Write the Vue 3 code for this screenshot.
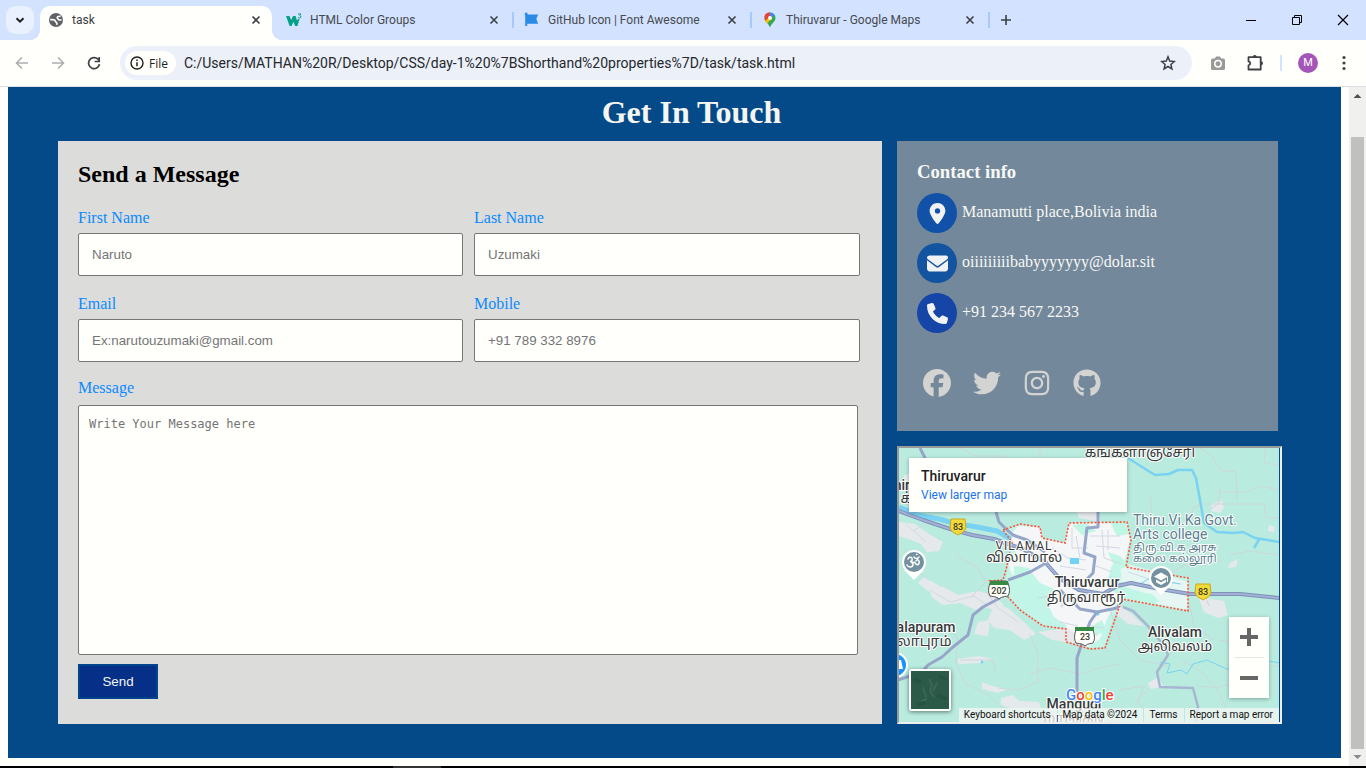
<script setup>
const tabs = [
  { title: 'task', icon: 'globe', active: true },
  { title: 'HTML Color Groups', icon: 'w3' },
  { title: 'GitHub Icon | Font Awesome', icon: 'flag' },
  { title: 'Thiruvarur - Google Maps', icon: 'pin' }
]

const fields = [
  { id: 'first', label: 'First Name', hint: 'Naruto', type: 'text' },
  { id: 'last', label: 'Last Name', hint: 'Uzumaki', type: 'text' },
  { id: 'email', label: 'Email', hint: 'Ex:narutouzumaki@gmail.com', type: 'email' },
  { id: 'mobile', label: 'Mobile', hint: '+91 789 332 8976', type: 'tel' }
]

const contacts = [
  {
    tone: 'place', text: 'Manamutti place,Bolivia india', box: '0 0 384 512',
    path: 'M215.7 499.2C267 435 384 279.4 384 192C384 86 298 0 192 0S0 86 0 192c0 87.4 117 243 168.3 307.2c12.3 15.3 35.1 15.3 47.4 0zM192 128a64 64 0 1 1 0 128 64 64 0 1 1 0-128z'
  },
  {
    tone: 'mail', text: 'oiiiiiiiiibabyyyyyyy@dolar.sit', box: '0 0 512 512',
    path: 'M48 64C21.5 64 0 85.5 0 112c0 15.1 7.1 29.3 19.2 38.4L236.8 313.6c11.4 8.5 27 8.5 38.4 0L492.8 150.4c12.1-9.1 19.2-23.3 19.2-38.4c0-26.5-21.5-48-48-48H48zM0 176V384c0 35.3 28.7 64 64 64H448c35.3 0 64-28.7 64-64V176L294.4 339.2c-22.8 17.1-54 17.1-76.8 0L0 176z'
  },
  {
    tone: 'phone', text: '+91 234 567 2233', box: '0 0 512 512',
    path: 'M164.9 24.6c-7.7-18.6-28-28.5-47.4-23.2l-88 24C12.1 30.2 0 46 0 64C0 311.4 200.6 512 448 512c18 0 33.8-12.1 38.6-29.5l24-88c5.3-19.4-4.6-39.7-23.2-47.4l-96-40c-16.3-6.8-35.2-2.1-46.3 11.6L304.7 368C234.3 334.7 177.3 277.7 144 207.3L193.3 167c13.7-11.2 18.4-30 11.6-46.3l-40-96z'
  }
]

const socials = [
  {
    name: 'Facebook', box: '0 0 512 512',
    path: 'M512 256C512 114.6 397.4 0 256 0S0 114.6 0 256C0 376 82.7 476.8 194.2 504.5V334.2H141.4V256h52.8V222.3c0-87.1 39.4-127.5 125-127.5c16.2 0 44.2 3.2 55.7 6.4V172c-6-.6-16.5-1-29.6-1c-42 0-58.2 15.9-58.2 57.2V256h83.6l-14.4 78.2H287V510.1C413.8 494.8 512 386.9 512 256z'
  },
  {
    name: 'Twitter', box: '0 0 512 512',
    path: 'M459.37 151.716c.325 4.548.325 9.097.325 13.645 0 138.72-105.583 298.558-298.558 298.558-59.452 0-114.68-17.219-161.137-47.106 8.447.974 16.568 1.299 25.34 1.299 49.055 0 94.213-16.568 130.274-44.832-46.132-.975-84.792-31.188-98.112-72.772 6.498.974 12.995 1.624 19.818 1.624 9.421 0 18.843-1.3 27.614-3.573-48.081-9.747-84.143-51.98-84.143-102.985v-1.299c13.969 7.797 30.214 12.67 47.431 13.319-28.264-18.843-46.781-51.005-46.781-87.391 0-19.492 5.197-37.36 14.294-52.954 51.655 63.675 129.3 105.258 216.365 109.807-1.624-7.797-2.599-15.918-2.599-24.04 0-57.828 46.782-104.934 104.934-104.934 30.213 0 57.502 12.67 76.67 33.137 23.715-4.548 46.456-13.32 66.599-25.34-7.798 24.366-24.366 44.833-46.132 57.827 21.117-2.273 41.584-8.122 60.426-16.243-14.292 20.791-32.161 39.308-52.628 54.253z'
  },
  {
    name: 'Instagram', box: '0 0 448 512',
    path: 'M224.1 141c-63.6 0-114.9 51.3-114.9 114.9s51.3 114.9 114.9 114.9S339 319.5 339 255.9 287.7 141 224.1 141zm0 189.6c-41.1 0-74.7-33.5-74.7-74.7s33.5-74.7 74.7-74.7 74.7 33.5 74.7 74.7-33.6 74.7-74.7 74.7zm146.4-194.3c0 14.9-12 26.8-26.8 26.8-14.9 0-26.8-12-26.8-26.8s12-26.8 26.8-26.8 26.8 12 26.8 26.8zm76.1 27.2c-1.7-35.9-9.9-67.7-36.2-93.9-26.2-26.2-58-34.4-93.9-36.2-37-2.1-147.9-2.1-184.9 0-35.8 1.7-67.6 9.9-93.9 36.1s-34.4 58-36.2 93.9c-2.1 37-2.1 147.9 0 184.9 1.7 35.9 9.9 67.7 36.2 93.9s58 34.4 93.9 36.2c37 2.1 147.9 2.1 184.9 0 35.9-1.7 67.7-9.9 93.9-36.2 26.2-26.2 34.4-58 36.2-93.9 2.1-37 2.1-147.8 0-184.8zM398.8 388c-7.8 19.6-22.9 34.7-42.6 42.6-29.5 11.7-99.5 9-132.1 9s-102.7 2.6-132.1-9c-19.6-7.8-34.7-22.9-42.6-42.6-11.7-29.5-9-99.5-9-132.1s-2.6-102.7 9-132.1c7.8-19.6 22.9-34.7 42.6-42.6 29.5-11.7 99.5-9 132.1-9s102.7-2.6 132.1 9c19.6 7.8 34.7 22.9 42.6 42.6 11.7 29.5 9 99.5 9 132.1s2.7 102.7-9 132.1z'
  },
  {
    name: 'GitHub', box: '0 0 496 512',
    path: 'M165.9 397.4c0 2-2.3 3.6-5.2 3.6-3.3.3-5.6-1.3-5.6-3.6 0-2 2.3-3.6 5.2-3.6 3-.3 5.6 1.3 5.6 3.6zm-31.1-4.5c-.7 2 1.3 4.3 4.3 4.9 2.6 1 5.6 0 6.2-2s-1.3-4.3-4.3-5.2c-2.6-.7-5.5.3-6.2 2.3zm44.2-1.7c-2.9.7-4.9 2.6-4.6 4.9.3 2 2.9 3.3 5.9 2.6 2.9-.7 4.9-2.6 4.6-4.6-.3-1.9-3-3.2-5.9-2.9zM244.8 8C106.1 8 0 113.3 0 252c0 110.9 69.8 205.8 169.5 239.2 12.8 2.3 17.3-5.6 17.3-12.1 0-6.2-.3-40.4-.3-61.4 0 0-70 15-84.7-29.8 0 0-11.4-29.1-27.8-36.6 0 0-22.9-15.7 1.6-15.4 0 0 24.9 2 38.6 25.8 21.9 38.6 58.6 27.5 72.9 20.9 2.3-16 8.8-27.1 16-33.7-55.9-6.2-112.3-14.3-112.3-110.5 0-27.5 7.6-41.3 23.6-58.9-2.6-6.5-11.1-33.3 2.6-67.9 20.9-6.5 69 27 69 27 20-5.6 41.5-8.5 62.8-8.5s42.8 2.9 62.8 8.5c0 0 48.1-33.6 69-27 13.7 34.7 5.2 61.4 2.6 67.9 16 17.7 25.8 31.5 25.8 58.9 0 96.5-58.9 104.2-114.8 110.5 9.2 7.9 17 22.9 17 46.4 0 33.7-.3 75.4-.3 83.6 0 6.5 4.6 14.4 17.3 12.1C428.2 457.8 496 362.9 496 252 496 113.3 383.5 8 244.8 8z'
  }
]
</script>

<template>
  <div class="window">
    <header class="tabstrip">
      <button class="tab-search" aria-label="Search tabs">
        <svg width="12" height="12" viewBox="0 0 12 12"><path d="M2.5 4.2 6 7.7l3.5-3.5" fill="none" stroke="#1f1f1f" stroke-width="2" /></svg>
      </button>
      <nav class="tabs">
        <div v-for="tab in tabs" :key="tab.title" class="tab" :class="{ active: tab.active }">
          <svg v-if="tab.icon === 'globe'" class="favicon" viewBox="0 0 16 16">
            <circle cx="8" cy="8" r="7" fill="#5f6368" />
            <path d="M2.200 7.600c2 0 3.600-.2 4.600.6.900.8.300 1.700 1.400 2.100 1 .4.800 1.600.3 2.600M12.600 4.400c-1.600-.2-3-.2-3.400.9-.3 1 1 1 .9 1.900-.1.900 1.200 1 3.400.7" fill="none" stroke="#fffffc" stroke-width="1.600" />
          </svg>
          <svg v-else-if="tab.icon === 'w3'" class="favicon" viewBox="0 0 16 16">
            <path d="M0 4h3.400l1.800 4L7 4h2.600l1.400 4.500L12.200 7h1.300L11.400 14H9.200L7.400 9.800 5.500 14H3.600z" fill="#04a088" />
            <path d="M12 2h3l-1.300 1.700c1.500.1 1.600 2.300-.1 2.300-.8 0-1.400-.3-1.600-.9" fill="none" stroke="#04a088" stroke-width="1" />
          </svg>
          <svg v-else-if="tab.icon === 'flag'" class="favicon" viewBox="0 0 16 16">
            <path d="M2.200 2v12" stroke="#2b8ae8" stroke-width="2" />
            <circle cx="2.200" cy="2" r="1.500" fill="#2b8ae8" />
            <path d="M2 2.600h12.200L12.300 7l1.900 4.800H2z" fill="#2b8ae8" />
          </svg>
          <svg v-else class="favicon" viewBox="0 0 16 16">
            <path d="M8 .5a5.500 5.500 0 0 0-5.500 5.500c0 4 4 5 5.500 9.500C9.500 11 13.500 10 13.500 6A5.500 5.500 0 0 0 8 .5z" fill="#34a853" />
            <path d="M8 .5A5.500 5.500 0 0 1 12.800 3.400L8 6z" fill="#4285f4" />
            <path d="M8 .5 8 6 3.600 9.300C2 7 2.200 3 4 1.800 5 .9 6.500.5 8 .5z" fill="#ea4335" />
            <path d="M3.200 8.800 8 5l1.800 1.600-4.700 5z" fill="#fbbc04" />
            <circle cx="8" cy="6" r="2" fill="#fffffc" />
          </svg>
          <span class="tab-title">{{ tab.title }}</span>
          <button class="tab-close" aria-label="Close tab">
            <svg width="10" height="10" viewBox="0 0 10 10"><path d="M1.500 1.500l7 7M8.500 1.500l-7 7" stroke="currentColor" stroke-width="1.600" /></svg>
          </button>
        </div>
      </nav>
      <button class="new-tab" aria-label="New tab">
        <svg width="12" height="12" viewBox="0 0 12 12"><path d="M6 1v10M1 6h10" stroke="#3c4043" stroke-width="1.600" /></svg>
      </button>
      <div class="window-controls">
        <button aria-label="Minimize"><svg width="12" height="12" viewBox="0 0 12 12"><path d="M1 6.500h10" stroke="#000" /></svg></button>
        <button aria-label="Restore"><svg width="12" height="12" viewBox="0 0 12 12"><path d="M1.500 3.500h7v7h-7zM3.500 3.500v-2h7v7h-2" fill="none" stroke="#000" /></svg></button>
        <button aria-label="Close"><svg width="12" height="12" viewBox="0 0 12 12"><path d="M1 1l10 10M11 1 1 11" stroke="#000" stroke-width="1.200" /></svg></button>
      </div>
    </header>

    <div class="toolbar">
      <button class="tool" aria-label="Back">
        <svg width="14" height="14" viewBox="0 0 14 14"><path d="M13 7H2M7 1.500 1.500 7 7 12.500" fill="none" stroke="#adaeb0" stroke-width="1.600" /></svg>
      </button>
      <button class="tool" aria-label="Forward">
        <svg width="14" height="14" viewBox="0 0 14 14"><path d="M1 7h11M7 1.500 12.500 7 7 12.500" fill="none" stroke="#adaeb0" stroke-width="1.600" /></svg>
      </button>
      <button class="tool" aria-label="Reload">
        <svg width="14" height="14" viewBox="0 0 14 14"><path d="M12.500 8.200A5.500 5.500 0 1 1 11 3.200L12.500 4.800" fill="none" stroke="#3f4144" stroke-width="1.700" /><path d="M12.200 1v4.500H7.600" fill="none" stroke="#3f4144" stroke-width="1.700" /></svg>
      </button>
      <div class="omnibox">
        <button class="chip">
          <svg width="14" height="14" viewBox="0 0 14 14"><circle cx="7" cy="7" r="6" fill="none" stroke="#1f1f1f" stroke-width="1.400" /><path d="M7 6.300v4M7 3.600v1.500" stroke="#1f1f1f" stroke-width="1.500" /></svg>
          File
        </button>
        <input class="url" type="text" aria-label="Address" value="C:/Users/MATHAN%20R/Desktop/CSS/day-1%20%7BShorthand%20properties%7D/task/task.html" />
        <button class="star" aria-label="Bookmark">
          <svg width="16" height="16" viewBox="0 0 16 16"><path d="M8 1.800l1.700 4.300 4.700.4-3.500 3 1 4.500L8 11.500 4.100 14l1-4.500-3.500-3 4.700-.4z" fill="none" stroke="#3f4144" stroke-width="1.500" /></svg>
        </button>
      </div>
      <button class="tool camera" aria-label="Screenshot">
        <svg width="16" height="14" viewBox="0 0 16 14"><path d="M2.500 2.500h2.300L6 .5h4l1.200 2h2.300a1.500 1.500 0 0 1 1.500 1.500v8.500a1.500 1.500 0 0 1-1.500 1.500h-11A1.500 1.500 0 0 1 1 12.500V4a1.500 1.500 0 0 1 1.500-1.500z" fill="#9a9a9a" /><circle cx="8" cy="7.800" r="3.200" fill="none" stroke="#fffffc" stroke-width="1.500" /></svg>
      </button>
      <button class="tool" aria-label="Extensions">
        <svg width="18" height="18" viewBox="0 0 18 18"><path d="M2.500 3.200h12.200v12.300H2.500v-4.200c2.400-.6 2.400-3.300 0-3.900z" fill="none" stroke="#3f4144" stroke-width="1.800" stroke-linejoin="round" /><path d="M6.700 3a2 2 0 0 1 4 0zM15 7.300a2 2 0 0 1 0 4z" fill="#3f4144" /></svg>
      </button>
      <i class="divider"></i>
      <button class="tool" aria-label="Profile"><span class="avatar">M</span></button>
      <button class="tool" aria-label="Menu">
        <svg width="4" height="16" viewBox="0 0 4 16"><circle cx="2" cy="2.500" r="1.600" fill="#3f4144" /><circle cx="2" cy="8" r="1.600" fill="#3f4144" /><circle cx="2" cy="13.500" r="1.600" fill="#3f4144" /></svg>
      </button>
    </div>

    <div class="viewport">
      <main class="page">
        <section class="contact-page">
          <h1>Get In Touch</h1>
          <div class="columns">
            <form class="message-card" @submit.prevent>
              <h2>Send a Message</h2>
              <div class="fields">
                <div v-for="field in fields" :key="field.id" class="field">
                  <label :for="field.id">{{ field.label }}</label>
                  <input :id="field.id" :type="field.type" :placeholder="field.hint" />
                </div>
              </div>
              <label for="message" class="message-label">Message</label>
              <textarea id="message" placeholder="Write Your Message here"></textarea>
              <button class="send">Send</button>
            </form>

            <div class="side">
              <aside class="info-card">
                <h3>Contact info</h3>
                <ul class="contacts">
                  <li v-for="item in contacts" :key="item.tone">
                    <span class="badge" :class="item.tone"><svg height="21" width="21" :viewBox="item.box"><path :d="item.path" /></svg></span>
                    <span class="contact-text">{{ item.text }}</span>
                  </li>
                </ul>
                <div class="socials">
                  <a v-for="item in socials" :key="item.name" href="#" :aria-label="item.name">
                    <svg width="28" height="28" :viewBox="item.box"><path :d="item.path" /></svg>
                  </a>
                </div>
              </aside>

              <div class="map">
                <svg class="map-canvas" viewBox="899 448 380 274" preserveAspectRatio="xMinYMin slice">
                  <rect x="899" y="448" width="380" height="274" fill="#baebdf" />
                  <path d="M1003 530l17-6 20 3 2 11 23 5 4-20 58-1 4 18-5 27 21 4 41 7v33l-68-12-16 48-15 1-23-7v-13l-23-3-23-16-12-13-15-15 13-2 6-35z" fill="#c1f5e8" />
                  <g fill="#f5f6f7">
                    <path d="M1018 526l22 1 3 12 22 4 4-20 58-1 3 17-6 24-12 2-6 20 14 12-12 20-8 22-12 8-20-8-2-14-12-8-6-12 6-16-14-6-8-10-20 2-4-12 8-10-6-18z" />
                    <path d="M1120 562l30 8 38 12v28l-30-6-16-12-20-6z" opacity=".7" />
                  </g>
                  <g fill="#e6e9ec">
                    <path d="M899 522l16 2 14 10 14 8-4 9-12 1-6-8-10-4-12-4z" />
                    <path d="M928 585l16 2 14 8 20-4 16 4 10 10-6 6-14-4-8 3-16-7-18 2-10-8z" />
                    <path d="M994 604l14 4 18 16 10 10-12 6-14-10-16-2-6-8z" />
                    <path d="M978 622l12-2-2 16-14-2z" /><path d="M1038 632l28-4 16 8-2 8-28-4z" />
                    <path d="M957 659l22-3 14 3-14 4-20 1z" /><path d="M982 682l10 4 16 3-10 4-16-4z" /><path d="M1001 698l12-3 6 6 20 1 2 6-28 1-12-4z" />
                    <path d="M1212 504l10-4 2 8-4 5-9-2z" /><path d="M1269 525l6 2-1 5-6-1z" /><path d="M1230 563l8-4-2 8-8 1z" />
                    <path d="M1198 597l26 4 4 14-10 3-14-6z" /><path d="M1148 683l10-6 6 10-14 2z" /><path d="M1116 604l16 10 12 12-16-2-12-10z" /><path d="M904 475l16-2 14 10-12 10-18-4z" />
                    <path d="M1075 508l22 2 4 12-22-4z" /><path d="M918 583l6-6 14 8 4 8-14-2z" />
                  </g>
                  <g fill="#bff6e4">
                    <path d="M1072 525l14-2 10 8-14 4z" /><path d="M1108 552l12 4 10 10-14 4z" /><path d="M1110 522l16 0 3 12-12 2z" /><path d="M1132 592l20 2 8 8-22 0z" /><path d="M1014 566l16 2-2 20-14 6z" /><path d="M1092 626l10-6 4 10-10 6z" />
                  </g>
                  <g fill="none" stroke="#cdd7da" stroke-width="1">
                    <path d="M960 448l16 8h30l12 12M1040 448v20l6 24M1200 448l12 8 8 14 16 2 1 28M1218 492h28l14-6 18 4M1220 487l-1 16-8 6M1266 448l-2 14 14 4M1192 520v-12l10-4h62l2 14h14M1150 496l2 16-4 12" />
                    <path d="M905 548l10 22 14 10M956 556l22 12 8 14-14 14M925 640l-20-10M948 620l10 20-2 24 10 20 24 12 14 14M1038 598l26-4M1030 634l8 20v28l-20 8-20-2M960 660h32l4 10M1030 674l20-6 30 6 20-6 20-4" />
                    <path d="M1120 690l24-4-6 16 6 8M1150 688l-14 14M1110 610l10 30 20 20 28 6M1190 606l4 20 20 14M1198 686l20 2 16-6 24 2M1218 640l14 2M1203 590l6 16M1230 555l20-4 28 4M1172 572l22-12 28 2" />
                    <path d="M1240 668l30-2 9 0M1182 660l20 12 14 16 10 20M940 690l-18-12" />
                  </g>
                  <g fill="none" stroke="#d2d9e4" stroke-width="1">
                    <path d="M1072 528v20h16M1052 548l16 10 18 2M1060 566l26 4M1090 536h30M1096 546l24 2M1102 530l2 28 18 6M1076 536l4 22M1108 530v20M1070 596l20-2 12 8M1096 566l16 6M1060 606l18-2M1110 576l10 8M1062 590v18" />
                    <path d="M906 524l20 18M914 530l12-6M930 590l20 12 24-6 14 10M986 592l12 16 20 14M1128 572l30 10 24 2M1060 622l18 4M1090 626l14 2" />
                  </g>
                  <g fill="none" stroke="#79d2f2" stroke-linejoin="round">
                    <path d="M899 507l18 8 22 4 14 4 24 4 20 4 14 8" stroke-width="5" />
                    <path d="M1128 458l14 9 13 8 14-1 9-4 14 0 4 8 4 22 4 23 13 9 16 1 10-1 12 6 24 4M1260 538l-6 10" stroke-width="2.500" />
                    <path d="M1160 662l10 2-3 9 14-3 6 4 6-10 14-4 20 9 28-4 14-4 11 2" stroke-width="1" />
                    <path d="M1140 584l10-6 30 6" stroke-width="1" />
                  </g>
                  <path d="M1070 558h9v6h-9zM1096 610l4 3-2 3-4-2zM981 660l3 2-3 2z" fill="#6fd3f5" />
                  <g fill="none" stroke-linejoin="round" stroke-linecap="round">
                    <path d="M899 511l24 9 27 9 22 6 22 4 29 10 22 13 14 16 20 12 24 4 14-8 14-3 29 6 30 5 50 0 39 4" stroke="#7f91b9" stroke-width="4" />
                    <path d="M899 511l24 9 27 9 22 6 22 4 29 10 22 13 14 16 20 12 24 4 14-8 14-3 29 6 30 5 50 0 39 4" stroke="#a1b0d4" stroke-width="2" />
                  </g>
                  <g fill="none" stroke="#96a6ca" stroke-width="3" stroke-linejoin="round">
                    <path d="M1008 580l22-8 18-10M1000 598l-17 9-10 8-5 20-15 12-11 10-14 8-6 7-24 8" />
                    <path d="M996 512l3 10 8 8 6 5 14 5 18 12M1098 512v15l-11 1-3 25 11 4-2 16-6 6M1077 692v-34l6-18 7-18 7-10M1060 590l20 19 17 3 20-4 6-8M920 448l6 12" />
                    <path d="M1123 607l10 4 14 14 18 22 3 8-11 17 3 15 33 1 5 19-2 15" stroke="#a8b7d1" stroke-width="2.500" />
                  </g>
                  <path d="M1003 530l17-6 20 3 2 11 23 5 4-20 58-1 4 18-5 27 21 4 41 7v33l-66-12-17 49-15 1-24-7v-13l-23-3-23-16-12-13-18-16 13-1 4-14 5-24z" fill="none" stroke="#ff5238" stroke-width="1.600" stroke-dasharray="2 1.600" />

                  <g class="pins">
                    <path d="M904 570l10 10 10-10z" fill="#fffffc" />
                    <circle cx="914" cy="562" r="12" fill="#fffffc" /><circle cx="914" cy="562" r="10" fill="#7391a1" />
                    <path d="M908 559c1-3 5-2 4 1 0 1-1 1.500-2 1.500 4 0 4 5.500 0 5.500-1.500 0-2.500-1-3-2M912 563c2-2 3 0 4 1 2 2 4-1 3-3s-3-1-3 0M914 557c1 2 4 2 5 0M916.500 554.500h.5" fill="none" stroke="#fffffc" stroke-width="1.500" stroke-linecap="round" />
                    <path d="M1151 585l10 10 10-10z" fill="#fffffc" />
                    <circle cx="1161" cy="578" r="12" fill="#fffffc" /><circle cx="1161" cy="578" r="10" fill="#7391a1" />
                    <path d="M1161 572.500l7 4-7 4-7-4zM1156 579.500l5 2.800 5-2.800v2.700l-5 2.800-5-2.800zM1167 577h1v5h-1z" fill="#fffffc" />
                    <circle cx="895" cy="665" r="13" fill="#fffffc" /><circle cx="895" cy="665" r="11" fill="#1a92ff" /><path d="M899 660l2 0 2 9h-4z" fill="#fffffc" />
                  </g>
                  <g font-size="9" font-weight="500" text-anchor="middle" fill="#3c3c2c">
                    <path d="M951 519h14l1 9q-1 4-8 7-7-3-8-7z" fill="#f2da3a" stroke="#c9a91e" /><text x="958" y="530">83</text>
                    <path d="M1196 584h14l1 9q-1 4-8 7-7-3-8-7z" fill="#f2da3a" stroke="#c9a91e" /><text x="1203" y="595">83</text>
                    <path d="M990 583q0-2 2-2h14q2 0 2 2 3 8 0 13-8 1-9 3-1-2-9-3-3-5 0-13z" fill="#fffffc" stroke="#555" /><path d="M990 581h18v4h-18z" fill="#388a42" /><text x="999" y="594">202</text>
                    <path d="M1076 630q0-2 2-2h13q2 0 2 2 3 8 0 13-7 1-8 3-1-2-9-3-3-5 0-13z" fill="#fffffc" stroke="#555" /><path d="M1075 627h19v4h-19z" fill="#388a42" /><text x="1085" y="640">23</text>
                  </g>
                  <g class="labels" text-anchor="middle">
                    <text x="1140" y="457" class="local">கங்களாஞ்சேரி</text>
                    <text x="910" y="490" text-anchor="end">nir</text>
                    <text x="912" y="503" text-anchor="end" class="local">க்</text>
                    <text x="1024" y="550" class="area">VILAMAL</text>
                    <text x="1024" y="562" class="local">விலாமால்</text>
                    <text x="1087" y="587">Thiruvarur</text>
                    <text x="1086" y="602" class="local">திருவாரூர்</text>
                    <text x="1175" y="637">Alivalam</text>
                    <text x="1175" y="651" class="local">அலிவலம்</text>
                    <text x="926" y="632">alapuram</text>
                    <text x="924" y="646" class="local">லாபுரம்</text>
                    <text x="1074" y="709">Mangudi</text>
                    <text x="1074" y="723" class="local">மாங்குடி</text>
                  </g>
                  <g class="labels poi">
                    <text x="1133" y="525">Thiru.Vi.Ka Govt.</text>
                    <text x="1133" y="539">Arts college</text>
                    <text x="1133" y="551" class="local">திரு.வி.க அரசு</text>
                    <text x="1133" y="562" class="local">கலை கல்லூரி</text>
                  </g>
                  <text x="1066" y="700" class="logo"><tspan fill="#4285f4">G</tspan><tspan fill="#ea4335">o</tspan><tspan fill="#fbbc04">o</tspan><tspan fill="#4285f4">g</tspan><tspan fill="#34a853">l</tspan><tspan fill="#ea4335">e</tspan></text>
                </svg>
                <div class="place-card">
                  <strong>Thiruvarur</strong>
                  <a href="#">View larger map</a>
                </div>
                <button class="satellite" aria-label="Show satellite imagery">
                  <svg width="38" height="38" viewBox="0 0 38 38"><rect width="38" height="38" fill="#2c5a48" /><path d="M18 8l3 6-2 6 4 6M12 16l3 10M26 12l-4 8M10 30l6-2" fill="none" stroke="#557a69" stroke-width="2" opacity=".4" /><path d="M26 24l10 4M2 8l8 3M6 34l8-2M28 6l8 2" stroke="#244c3b" stroke-width="3" opacity=".5" /></svg>
                </button>
                <div class="zoom">
                  <button aria-label="Zoom in"><svg width="18" height="18" viewBox="0 0 18 18"><path d="M9 0v18M0 9h18" stroke="#666" stroke-width="4" /></svg></button>
                  <button aria-label="Zoom out"><svg width="18" height="18" viewBox="0 0 18 18"><path d="M0 9h18" stroke="#666" stroke-width="4" /></svg></button>
                </div>
                <footer class="credits">
                  <button>Keyboard shortcuts</button>
                  <span>Map data ©2024</span>
                  <a href="#">Terms</a>
                  <a href="#">Report a map error</a>
                </footer>
              </div>
            </div>
          </div>
        </section>
      </main>
      <div class="scrollbar">
        <svg width="17" height="17" viewBox="0 0 17 17"><path d="M4.500 11 8.500 7l4 4z" fill="#505050" /></svg>
        <i class="thumb"></i>
        <svg width="17" height="17" viewBox="0 0 17 17"><path d="M4.500 6 8.500 10l4-4z" fill="#8a8a8a" /></svg>
      </div>
    </div>
    <div class="taskbar"><i></i></div>
  </div>
</template>

<style>
body {
  margin: 0;
  overflow: hidden;
}
</style>

<style scoped>
* {
  box-sizing: border-box;
}
.window {
  display: flex;
  flex-direction: column;
  height: 100vh;
  background: #fffffc;
  font-family: Roboto, "Open Sans", sans-serif;
}
button {
  padding: 0;
  border: 0;
  background: none;
}
svg {
  display: block;
}

/* tab strip */
.tabstrip {
  display: flex;
  align-items: center;
  flex: none;
  height: 40px;
  padding-left: 6px;
  background: #d2e2ff;
}
.tab-search {
  display: grid;
  place-items: center;
  width: 28px;
  height: 28px;
  border-radius: 9px;
  background: #e9f0fe;
}
.tabs {
  display: flex;
  align-self: flex-end;
  gap: 6px;
  margin-left: 6px;
}
.tab {
  position: relative;
  display: flex;
  align-items: center;
  width: 232px;
  height: 34px;
  padding: 0 8px 6px;
  color: #474a4f;
  font-size: 12px;
}
.tab.active {
  border-radius: 10px 10px 0 0;
  background: #fffffc;
  color: #3a3c40;
}
.tab.active::before,
.tab.active::after {
  content: "";
  position: absolute;
  bottom: 0;
  width: 10px;
  height: 10px;
}
.tab.active::before {
  left: -10px;
  background: radial-gradient(circle at 0 0, #d2e2ff 10px, #fffffc 10px);
}
.tab.active::after {
  right: -10px;
  background: radial-gradient(circle at 100% 0, #d2e2ff 10px, #fffffc 10px);
}
.tab:not(.active)::after {
  content: "";
  position: absolute;
  top: 6px;
  right: -4px;
  width: 2px;
  height: 16px;
  background: #a8c7fa;
}
.favicon {
  width: 16px;
  height: 16px;
  margin-right: 8px;
}
.tab-title {
  flex: 1;
  white-space: nowrap;
}
.tab-close {
  display: grid;
  place-items: center;
  width: 16px;
  height: 16px;
  color: #3c4043;
}
.new-tab {
  display: grid;
  place-items: center;
  width: 28px;
  height: 28px;
  margin-left: 6px;
}
.window-controls {
  display: flex;
  margin-left: auto;
}
.window-controls button {
  display: grid;
  place-items: center;
  width: 46px;
  height: 40px;
}

/* toolbar */
.toolbar {
  display: flex;
  align-items: center;
  flex: none;
  height: 47px;
  padding: 0 4px;
  border-bottom: 1px solid #dcdfe3;
  border-radius: 8px 8px 0 0;
  background: #fffffc;
}
.tool {
  display: grid;
  place-items: center;
  flex: none;
  width: 36px;
  height: 36px;
}
.omnibox {
  display: flex;
  align-items: center;
  flex: 1;
  height: 34px;
  margin: 0 8px;
  padding: 0 16px 0 5px;
  border-radius: 17px;
  background: #ebf0f9;
}
.chip {
  display: flex;
  align-items: center;
  gap: 5px;
  height: 24px;
  padding: 0 8px 0 5px;
  border-radius: 12px;
  background: #fffffc;
  color: #1f1f1f;
  font: 500 12px "Open Sans", sans-serif;
}
.url {
  flex: 1;
  min-width: 0;
  padding: 0 8px;
  border: 0;
  outline: 0;
  background: none;
  color: #26282b;
  font: 14px Roboto, "Open Sans", sans-serif;
}
.camera {
  margin-right: 1px;
}
.divider {
  width: 2px;
  height: 16px;
  margin: 0 8px 0 7px;
  background: #d2e2ff;
}
.avatar {
  width: 20px;
  border-radius: 50%;
  background: #a456b8;
  color: #fff;
  font: 11px/20px Roboto, sans-serif;
}

/* page */
.viewport {
  display: flex;
  flex: 1;
  min-height: 0;
}
.page {
  flex: 1;
  padding: 0 8px;
  font-family: "Liberation Serif", "Times New Roman", serif;
  font-size: 16px;
  line-height: 18px;
}
.contact-page {
  padding: 7px 63px 34px 50px;
  background: #044a88;
}
h1,
h2,
h3 {
  margin: 0;
}
h1 {
  margin: 0 -63px 11px -16px;
  color: #f5f5f2;
  font-size: 32px;
  line-height: 36px;
  text-align: center;
}
.columns {
  display: grid;
  grid-template-columns: 824fr 381fr;
  gap: 15px;
}
.message-card {
  display: flex;
  flex-direction: column;
  align-items: flex-start;
  padding: 19px 22px 25px 20px;
  background: #dcdcdb;
}
h2 {
  margin-bottom: 21px;
  color: #000;
  font-size: 24px;
  line-height: 28px;
}
label {
  color: #0a8aff;
}
.fields {
  display: grid;
  grid-template-columns: 385fr 386fr;
  gap: 19px 11px;
  width: 100%;
}
.field {
  display: flex;
  flex-direction: column;
  gap: 6px;
}
.field input {
  height: 43px;
  padding: 0 13px;
  border: 1px solid #767676;
  border-radius: 2px;
  background: #fffffc;
  font-family: "Liberation Sans", Arial, sans-serif;
}
.field input::placeholder,
textarea::placeholder {
  color: #757575;
}
.message-label {
  margin-top: 17px;
}
textarea {
  width: calc(100% - 2px);
  height: 250px;
  margin: 8px 0 9px;
  padding: 11px 10px;
  border: 1px solid #767676;
  border-radius: 2px;
  background: #fffffc;
  font: 12px "DejaVu Sans Mono", monospace;
  resize: none;
}
.send {
  width: 80px;
  height: 35px;
  border: 2px solid #03458c;
  background: #062f87;
  color: #f5f5f2;
  font-family: "Liberation Sans", Arial, sans-serif;
}
.side {
  display: flex;
  flex-direction: column;
  gap: 15px;
}
.info-card {
  padding: 20px 20px 34px;
  background: #73889b;
  color: #f8f8f5;
}
h3 {
  margin-bottom: 10px;
  line-height: 22px;
}
.contacts {
  display: grid;
  gap: 10px;
  margin: 0 0 36px;
  padding: 0;
  list-style: none;
}
.contacts li {
  display: flex;
  align-items: center;
  gap: 5px;
}
.contact-text {
  padding-bottom: 2px;
}
.badge {
  display: grid;
  place-items: center;
  width: 40px;
  height: 40px;
  border-radius: 50%;
  fill: #f0f2f4;
}
.place {
  background: #1152a8;
}
.mail {
  background: #1254a0;
}
.phone {
  background: #1545a6;
}
.socials {
  display: flex;
  gap: 10px;
}
.socials a {
  display: grid;
  place-items: center;
  width: 40px;
  fill: #d3d3d1;
}

/* map */
.map {
  position: relative;
  flex: 1;
  width: calc(100% + 4px);
  overflow: hidden;
  padding-right: 1px;
  border: 2px solid;
  border-color: #9a9a9a #eeeeec #eeeeec #9a9a9a;
  font-family: Roboto, sans-serif;
}
.map-canvas {
  width: 100%;
  height: 100%;
  font-family: Roboto, "Noto Sans Tamil", "Noto Sans", sans-serif;
}
.labels text,
.logo {
  paint-order: stroke;
  stroke: #fffffc;
  stroke-width: 2px;
  stroke-linejoin: round;
}
.labels text {
  fill: #35383b;
  font-size: 14px;
  font-weight: 500;
}
.labels .area {
  font-size: 12px;
  font-weight: 400;
  letter-spacing: 1px;
}
.labels .local {
  font-weight: 400;
}
.labels.poi text {
  fill: #5a7d91;
  font-weight: 400;
}
.labels.poi .local {
  font-size: 11px;
}
.logo {
  font-size: 15px;
  font-weight: 500;
}
.place-card {
  position: absolute;
  top: 10px;
  left: 10px;
  display: flex;
  flex-direction: column;
  gap: 3px;
  width: 218px;
  padding: 10px 12px 9px;
  background: #fffffc;
  box-shadow: 0 1px 4px rgba(0, 0, 0, 0.3);
}
.place-card strong {
  color: #1c1c1c;
  font-size: 14px;
  font-weight: 500;
  line-height: 16px;
}
.place-card a {
  color: #1a73e8;
  font-size: 12px;
  line-height: 16px;
  text-decoration: none;
}
.satellite {
  position: absolute;
  bottom: 11px;
  left: 10px;
  border: 2px solid #fffffc;
  border-radius: 3px;
  box-shadow: 0 1px 4px rgba(0, 0, 0, 0.5);
}
.zoom {
  position: absolute;
  right: 11px;
  bottom: 24px;
  width: 40px;
  padding: 0 5px;
  background: #fffffc;
  box-shadow: 0 1px 4px rgba(0, 0, 0, 0.3);
}
.zoom button {
  display: grid;
  place-items: center;
  width: 30px;
  height: 40px;
}
.zoom button + button {
  height: 41px;
  border-top: 1px solid #e6e6e6;
}
.credits {
  position: absolute;
  right: 1px;
  bottom: 0;
  display: flex;
  gap: 1px;
  font-size: 10px;
  line-height: 14px;
}
.credits > * {
  padding: 0 6px 0 5px;
  background: rgba(245, 245, 243, 0.75);
  color: #111;
  font: inherit;
  text-decoration: none;
  white-space: nowrap;
}

/* scrollbar and taskbar */
.scrollbar {
  display: flex;
  flex-direction: column;
  width: 17px;
  background: #f0f0ee;
}
.thumb {
  flex: 1;
  margin: 33px 2px 0;
  background: #c0c0bf;
}
.taskbar {
  display: flex;
  justify-content: flex-start;
  flex: none;
  height: 2px;
  background: #000;
}
.taskbar i {
  width: 48px;
  margin-left: 393px;
  background: #333;
}
</style>
